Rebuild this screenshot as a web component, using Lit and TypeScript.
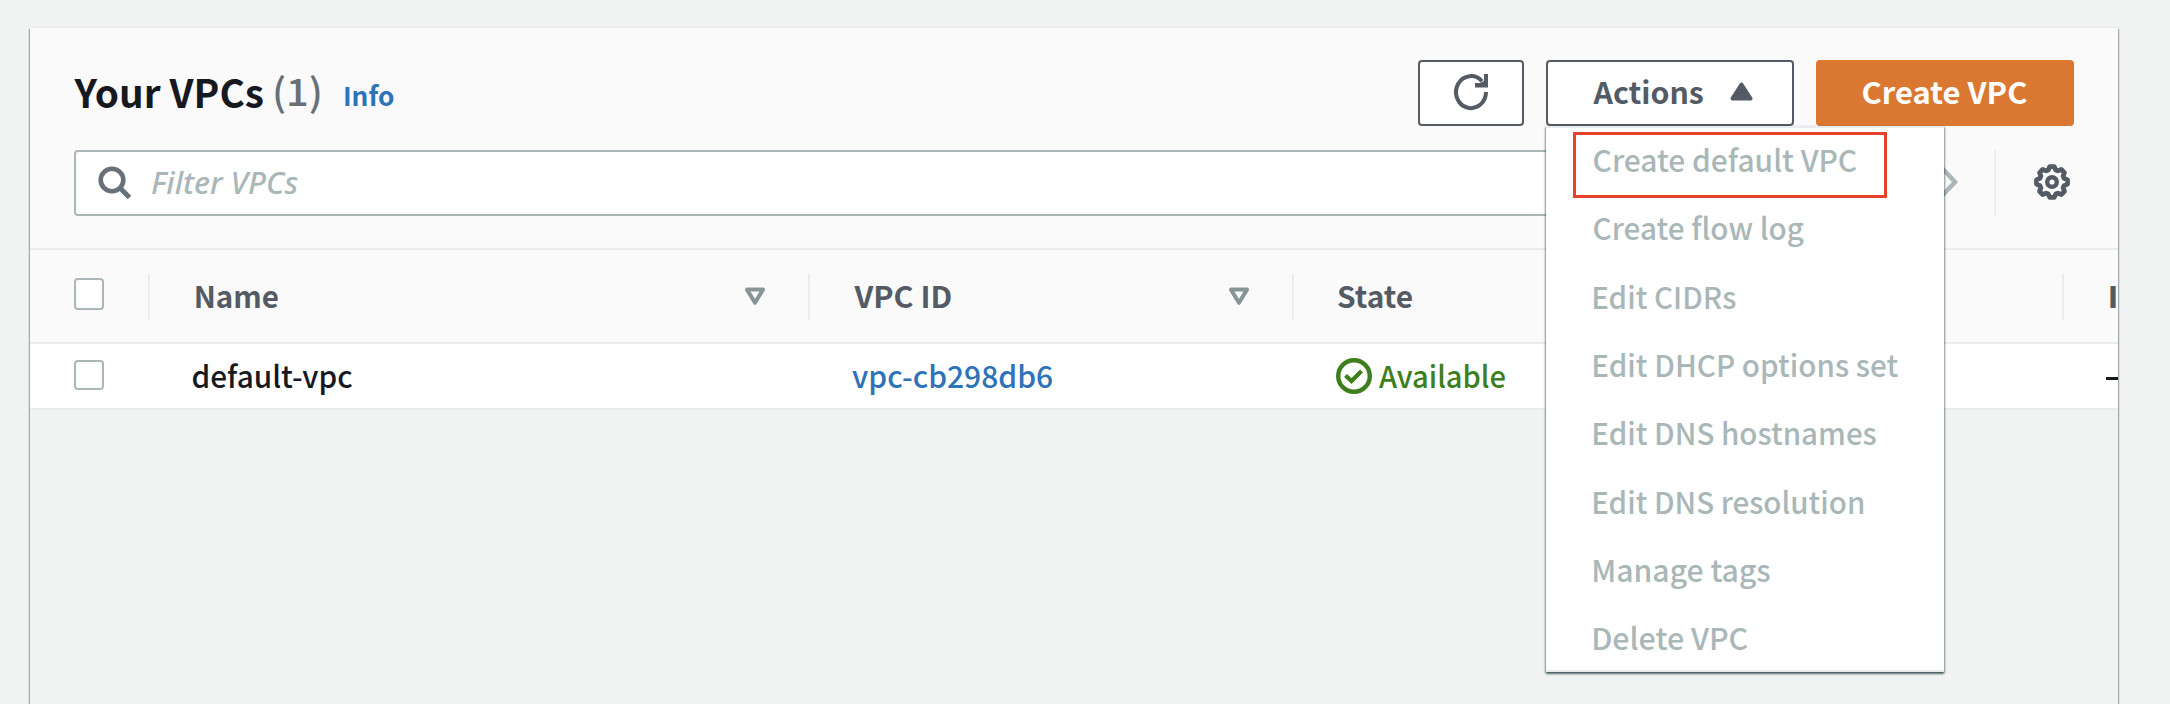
import { LitElement, html, css, svg } from "lit";
import { customElement, property } from "lit/decorators.js";

/** Text condensed or widened so that its glyphs span exactly `w` pixels. */
@customElement("fit-text")
class FitText extends LitElement {
  @property({ type: Number }) w = 100;
  @property() text = "";
  static styles = css`
    :host { display: block; flex: none; white-space: pre; }
    span { display: inline-block; transform-origin: 0 50%; white-space: pre; }
  `;
  render() {
    return html`<span>${this.text}</span>`;
  }
  updated() {
    const span = this.renderRoot.querySelector("span") as HTMLElement;
    const cs = getComputedStyle(span);
    const ctx = document.createElement("canvas").getContext("2d")!;
    // Measured at ten times the size, since glyph bounds are rounded to whole pixels.
    ctx.font = `${cs.fontStyle} ${cs.fontWeight} ${parseFloat(cs.fontSize) * 10}px ${cs.fontFamily}`;
    const m = ctx.measureText(this.text);
    const left = m.actualBoundingBoxLeft / 10;
    const scale = this.w / (m.actualBoundingBoxRight / 10 + left);
    this.style.width = `${this.w}px`;
    span.style.transform = `translateX(${left * scale}px) scaleX(${scale})`;
  }
}

const t = (text: string, w: number, cls = "") => html`<fit-text class=${cls} text=${text} .w=${w}></fit-text>`;

const gearPath = (() => {
  const pts: string[] = [];
  const n = 8;
  for (let i = 0; i < n; i++) {
    const a = (i * 2 * Math.PI) / n - Math.PI / 2;
    for (const [da, r] of [[-0.3, 12.6], [-0.14, 15.6], [0.14, 15.6], [0.3, 12.6]]) {
      pts.push(`${(18 + r * Math.cos(a + da)).toFixed(2)} ${(18 + r * Math.sin(a + da)).toFixed(2)}`);
    }
  }
  return `M${pts.join("L")}Z`;
})();

const sortIcon = html`<svg class="sort" width="22" height="19" viewBox="0 0 22 19">
  ${svg`<path d="M3 2.6H19L11 15.8Z" fill="none" stroke="#879596" stroke-width="4" stroke-linejoin="round"/>`}
</svg>`;

const menu: [string, number][] = [
  ["Create default VPC", 262.5], ["Create flow log", 210], ["Edit CIDRs", 141.5], ["Edit DHCP options set", 304],
  ["Edit DNS hostnames", 282], ["Edit DNS resolution", 269], ["Manage tags", 176], ["Delete VPC", 153.5],
];

@customElement("app-root")
class AppRoot extends LitElement {
  static styles = css`
    * { box-sizing: border-box; }
    :host {
      display: block; height: 704px; overflow: hidden; padding: 28px 52px 0 30px;
      background: #f1f3f3; font: 500 30px/44px "Noto Sans CJK JP", "Noto Sans", sans-serif; color: #16191f;
    }
    svg { display: block; flex: none; }
    .panel {
      position: relative; height: 720px;
      box-shadow: 0 -1px 0 0 #eaeded, 1px 1px 1px 0 rgba(0,28,36,.28), -1px 1px 1px 0 rgba(0,28,36,.28), 0 1px 3px 0 rgba(0,28,36,.2);
      background: #f1f3f3;
    }
    .head { height: 222px; padding: 32px 44px 0; background: #fafafa; border-bottom: 2px solid #eaeded; }
    .bar { display: flex; height: 66px; }
    .title { display: flex; flex: 1; align-items: flex-start; }
    .h1 { font-size: 38.5px; line-height: 60px; font-weight: 700; padding-top: 1px; }
    .count { font-size: 38px; line-height: 60px; color: #687078; margin-left: 12px; }
    .info { font-size: 26px; line-height: 60px; font-weight: 700; color: #2e73b8; margin-left: 25px; padding-top: 5px; }
    .btn {
      display: flex; height: 66px; border: 2px solid #545b64; border-radius: 4px; background: #fff;
      color: #545b64; font-weight: 700; line-height: 59px; margin-left: 22px;
    }
    .refresh { width: 106px; padding: 11px 34px; }
    .actions { width: 248px; padding: 0 39px 0 45px; justify-content: space-between; }
    .actions svg { margin-top: 20px; }
    .create { width: 258px; padding-left: 45px; background: #da7831; border-color: #da7831; color: #fff; }
    .filter { display: flex; margin-top: 24px; height: 66px; }
    .search {
      display: flex; width: 1600px; border: 2px solid #aab7b8; border-radius: 4px; background: #fff;
      padding: 14px 22px; color: #aab7b8; font-family: "Noto Sans", sans-serif; font-style: italic;
    }
    .search svg { margin-right: 20px; }
    .search fit-text { line-height: 34px; }
    .pager { flex: 1; padding: 14px 0 0 264px; }
    .prefs { width: 80px; border-left: 2px solid #eaeded; padding: 14px 0 0 38px; }
    .row { display: grid; grid-template-columns: 118px 660px 484px 770px 56px; overflow: hidden; }
    .th { height: 94px; background: #fafafa; border-bottom: 2px solid #eaeded; color: #545b64; font-weight: 700; }
    .td { height: 66px; background: #fff; border-bottom: 2px solid #eaeded; }
    .cell { display: flex; overflow: hidden; }
    .th .cell { height: 46px; margin-top: 24px; border-left: 2px solid #eaeded; padding: 0 42px 0 46px; justify-content: space-between; line-height: 42px; }
    .th .cell .sort { margin-top: 13px; }
    .th .cell:first-child, .td .cell:first-child { border: 0; padding: 0 0 0 44px; }
    .th .vpc, .th .state { padding-left: 44px; }
    .td .cell { padding: 10px 0 0 45px; line-height: 42px; }
    .td .vpc { padding-left: 44px; color: #2e73b8; }
    .td .state { padding-left: 44px; color: #3d7f1c; gap: 7px; }
    .td .state svg { margin-top: 4px; }
    .th .last { padding: 0 0 0 46px; width: 56px; }
    .td .last { padding-left: 44px; }
    .dash { width: 20px; height: 3px; margin-top: 23px; background: #16191f; }
    .box { width: 30px; height: 30px; border: 2px solid #aab7b8; border-radius: 4px; background: #fff; }
    .th .box { height: 32px; margin-top: 4px; }
    .td .box { margin-top: 16px; }
    .menu {
      position: absolute; left: 1516px; top: 98px; width: 398px; height: 546px; background: #fff;
      border-top: 2px solid #eaeded; border-bottom: 2px solid #eaeded; padding: 9px 0 0 47.5px; color: #aab7b8;
      box-shadow: 0 2px 2px 0 rgba(0,28,36,.5), 1px 1px 2px 0 rgba(0,28,36,.3), -1px 1px 2px 0 rgba(0,28,36,.3);
    }
    .menu fit-text { line-height: 44px; height: 68.35px; }
    .mark { position: absolute; left: 27px; top: 4px; width: 314px; height: 66px; border: 3px solid #e8412a; }
  `;
  render() {
    return html`<div class="panel">
      <div class="head">
        <div class="bar">
          <div class="title">${t("Your VPCs", 189, "h1")}${t("(1)", 45, "count")}${t("Info", 48.5, "info")}</div>
          <div class="btn refresh"><svg width="34" height="38" viewBox="0 0 34 38">
            <path d="M32 19A15 16 0 1 1 28 8.200" fill="none" stroke="#545b64" stroke-width="4"/>
            <path d="M30 1h4v13.500H21v-4.500h5l4-2z" fill="#545b64"/></svg></div>
          <div class="btn actions">${t("Actions", 110)}<svg width="23" height="19" viewBox="0 0 23 19">
            <path d="M11.500 2.500L20.500 16.500H2.500Z" fill="#545b64" stroke="#545b64" stroke-width="4" stroke-linejoin="round"/></svg></div>
          <div class="btn create">${t("Create VPC", 164)}</div>
        </div>
        <div class="filter">
          <div class="search"><svg width="34" height="34" viewBox="0 0 34 34" fill="none" stroke="#687078">
            <circle cx="14" cy="14" r="11.300" stroke-width="4.600"/><path d="M21.500 21.500L31.500 31.500" stroke-width="5"/></svg>
            ${t("Filter VPCs", 146)}</div>
          <div class="pager"><svg width="24" height="36" viewBox="0 0 24 36"><path d="M2 2L17 18L2 34" fill="none" stroke="#aab7b8" stroke-width="4.500"/></svg></div>
          <div class="prefs"><svg width="36" height="36" viewBox="0 0 36 36" fill="none" stroke="#545b64" stroke-width="4.800" stroke-linejoin="round">
            <path d=${gearPath}/><circle cx="18" cy="18" r="4.800" stroke-width="4.400"/></svg></div>
        </div>
      </div>
      <div class="row th">
        <div class="cell"><div class="box"></div></div>
        <div class="cell">${t("Name", 82)}${sortIcon}</div>
        <div class="cell vpc">${t("VPC ID", 97)}${sortIcon}</div>
        <div class="cell state">${t("State", 74)}</div>
        <div class="cell last">${t("I", 6)}</div>
      </div>
      <div class="row td">
        <div class="cell"><div class="box"></div></div>
        <div class="cell">${t("default-vpc", 159)}</div>
        <div class="cell vpc">${t("vpc-cb298db6", 200)}</div>
        <div class="cell state"><svg width="36" height="36" viewBox="0 0 36 36" fill="none" stroke="#3d7f1c">
          <circle cx="18" cy="18" r="15.800" stroke-width="4.400"/><path d="M9.500 17.500L15.500 23L25.500 13" stroke-width="4.200"/></svg>
          ${t("Available", 126)}</div>
        <div class="cell last"><div class="dash"></div></div>
      </div>
      <div class="menu">${menu.map(([s, w]) => t(s, w))}<div class="mark"></div></div>
    </div>`;
  }
}
